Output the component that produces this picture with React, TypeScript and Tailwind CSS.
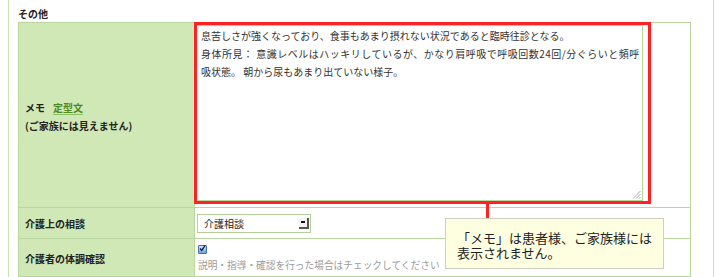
import React from "react";

export default function App() {
  return (
    <div
      className="relative w-[720px] h-[277px] overflow-hidden bg-white text-[#222]"
      style={{ fontFamily: '"Noto Sans CJK JP", "Noto Sans", sans-serif' }}
    >
      <div className="ml-[8px] w-[706px] h-full border-l border-r border-[#c9e1b3] pl-[9px]">
        <div className="h-[22px] pt-[8px] text-[10px] leading-[12px] font-bold">その他</div>
        <div className="w-[673px] border border-[#b8d69e] grid grid-cols-[176px_1fr]">
          {/* Row 1 */}
          <div className="h-[184px] bg-[#d0e8b5] border-r border-[#b8d69e] flex flex-col justify-center px-[6px] pt-[3px] text-[10px] leading-[18px] font-bold">
            <div>
              メモ<span className="ml-[8px] text-[#4f8a1e] underline underline-offset-2 decoration-[#8fbf60]">定型文</span>
            </div>
            <div>(ご家族には見えません)</div>
          </div>
          <div className="h-[184px] pl-[1px] pt-[2px]">
            <div className="relative w-[447px] h-[176px] border border-[#b8d69e] bg-white pl-[4px] pt-[1px] text-[10px] leading-[18px] text-[#333] whitespace-nowrap">
              <div>息苦しさが強くなっており、食事もあまり摂れない状況であると臨時往診となる。</div>
              <div className="tracking-[0.5px]">身体所見： 意識レベルはハッキリしているが、かなり肩呼吸で呼吸回数24回/分ぐらいと頻呼</div>
              <div>吸状態。 朝から尿もあまり出ていない様子。</div>
              <svg width="9" height="9" viewBox="0 0 9 9" className="absolute right-[1px] bottom-[1px]">
                <path d="M8.5 1 L1 8.5 M8.5 4 L4 8.5 M8.5 7 L7 8.5" stroke="#9a9a9a" strokeWidth="0.9" />
              </svg>
            </div>
          </div>
          {/* Row 2 */}
          <div className="h-[31px] bg-[#d0e8b5] border-t border-r border-[#b8d69e] flex items-center px-[6px] text-[10px] font-bold">
            介護上の相談
          </div>
          <div className="h-[31px] border-t border-[#b8d69e] flex items-center pl-[2px]">
            <div className="flex items-center w-[114px] h-[19px] border border-[#b5cf98] bg-white pl-[6px] pr-[1px] text-[10px] text-[#222]">
              <span className="flex-1">介護相談</span>
              <span className="flex items-center justify-center w-[10px] h-[11px] bg-[#f4f4f4] border-r-2 border-b-2 border-[#555]">
                <span className="block w-[4px] h-[2px] bg-[#111]" />
              </span>
            </div>
          </div>
          {/* Row 3 */}
          <div className="h-[38px] bg-[#d0e8b5] border-t border-r border-[#b8d69e] flex items-center px-[6px] pt-[2px] text-[10px] font-bold">
            介護者の体調確認
          </div>
          <div className="h-[38px] border-t border-[#b8d69e] flex flex-col items-start pl-[3px] pt-[6px]">
            <span className="flex items-end w-[9px] h-[9px] border border-[#4a6fa5] bg-gradient-to-b from-[#cfe3ff] to-[#6fa0e8] rounded-[1px]">
              <svg width="9" height="9" viewBox="0 0 9 9" className="-mt-[2px]">
                <path d="M1.5 4.5 L3.5 7 L8 0.5" stroke="#0b1c3a" strokeWidth="1.6" fill="none" />
              </svg>
            </span>
            <span className="mt-[5px] text-[9.7px] leading-[12px] text-[#9a9a9a] whitespace-nowrap">
              説明・指導・確認を行った場合はチェックしてください
            </span>
          </div>
        </div>
      </div>

      {/* annotation overlay */}
      <div className="absolute left-[194px] top-[22px] w-[457px] h-[182px] border-[3px] border-[#ff2222] pointer-events-none" />
      <div className="absolute left-[486px] top-[203px] w-[3px] h-[16px] bg-[#ff2222]" />
      <div className="absolute left-[445px] top-[218px] w-[219px] h-[51px] bg-[#fefee0] border border-[#cfcfbf] pl-[11px] pt-[11px] text-[13px] leading-[15px] text-[#222]">
        「メモ」は患者様、ご家族様には
        <br />
        表示されません。
      </div>
    </div>
  );
}
